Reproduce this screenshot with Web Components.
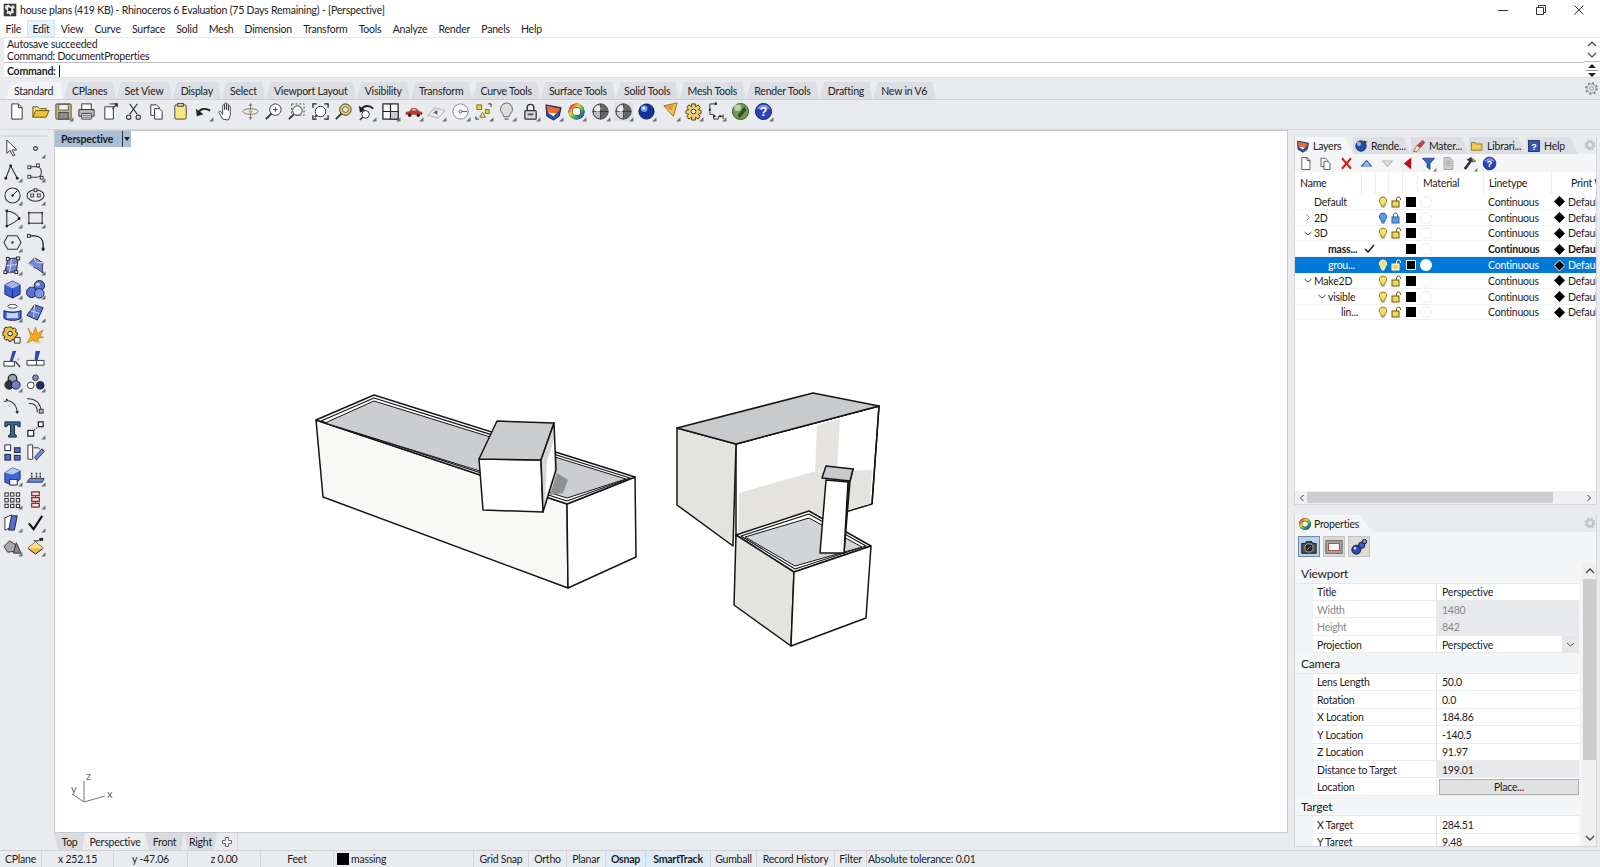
<!DOCTYPE html>
<html>
<head>
<meta charset="utf-8">
<title>house plans - Rhinoceros 6</title>
<style>
  html, body { margin: 0; height: 100%; overflow: hidden; background: #e9ebef; }
  body { font: 10.5px Lato, Roboto, sans-serif; letter-spacing: -.22px; color: #1c1c1c; }
</style>
</head>
<body>
<rh-app>
  <rh-titlebar slot="title">house plans (419 KB) - Rhinoceros 6 Evaluation (75 Days Remaining) - [Perspective]</rh-titlebar>
  <rh-menubar slot="menu">
    <rh-menu-item>File</rh-menu-item><rh-menu-item hot>Edit</rh-menu-item><rh-menu-item>View</rh-menu-item><rh-menu-item>Curve</rh-menu-item><rh-menu-item>Surface</rh-menu-item><rh-menu-item>Solid</rh-menu-item><rh-menu-item>Mesh</rh-menu-item><rh-menu-item>Dimension</rh-menu-item><rh-menu-item>Transform</rh-menu-item><rh-menu-item>Tools</rh-menu-item><rh-menu-item>Analyze</rh-menu-item><rh-menu-item>Render</rh-menu-item><rh-menu-item>Panels</rh-menu-item><rh-menu-item>Help</rh-menu-item>
  </rh-menubar>
  <rh-command slot="command"></rh-command>
  <rh-toolbars slot="toolbars">
    <rh-tab slot="tabs" active>Standard</rh-tab><rh-tab slot="tabs">CPlanes</rh-tab><rh-tab slot="tabs">Set View</rh-tab><rh-tab slot="tabs">Display</rh-tab><rh-tab slot="tabs">Select</rh-tab><rh-tab slot="tabs">Viewport Layout</rh-tab><rh-tab slot="tabs">Visibility</rh-tab><rh-tab slot="tabs">Transform</rh-tab><rh-tab slot="tabs">Curve Tools</rh-tab><rh-tab slot="tabs">Surface Tools</rh-tab><rh-tab slot="tabs">Solid Tools</rh-tab><rh-tab slot="tabs">Mesh Tools</rh-tab><rh-tab slot="tabs">Render Tools</rh-tab><rh-tab slot="tabs">Drafting</rh-tab><rh-tab slot="tabs">New in V6</rh-tab>
  </rh-toolbars>
  <rh-sidebar slot="side"></rh-sidebar>
  <rh-viewport slot="view"></rh-viewport>
  <rh-layers slot="layers">
    <rh-layer name="Default" depth="0" bulb="y" lock="y"></rh-layer>
    <rh-layer name="2D" depth="0" chev="r" bulb="b" lock="b"></rh-layer>
    <rh-layer name="3D" depth="0" chev="d" bulb="y" lock="y"></rh-layer>
    <rh-layer name="mass..." depth="1" current></rh-layer>
    <rh-layer name="grou..." depth="1" bulb="y" lock="y" selected></rh-layer>
    <rh-layer name="Make2D" depth="0" chev="d" bulb="y" lock="y"></rh-layer>
    <rh-layer name="visible" depth="1" chev="d" bulb="y" lock="y"></rh-layer>
    <rh-layer name="lin..." depth="2" bulb="y" lock="y"></rh-layer>
  </rh-layers>
  <rh-properties slot="props">
    <rh-section>Viewport</rh-section>
    <rh-prop label="Title" value="Perspective"></rh-prop>
    <rh-prop label="Width" value="1480" off></rh-prop>
    <rh-prop label="Height" value="842" off></rh-prop>
    <rh-prop label="Projection" value="Perspective" combo></rh-prop>
    <rh-section>Camera</rh-section>
    <rh-prop label="Lens Length" value="50.0"></rh-prop>
    <rh-prop label="Rotation" value="0.0"></rh-prop>
    <rh-prop label="X Location" value="184.86"></rh-prop>
    <rh-prop label="Y Location" value="-140.5"></rh-prop>
    <rh-prop label="Z Location" value="91.97"></rh-prop>
    <rh-prop label="Distance to Target" value="199.01" ro></rh-prop>
    <rh-prop label="Location" value="Place..." button></rh-prop>
    <rh-section>Target</rh-section>
    <rh-prop label="X Target" value="284.51"></rh-prop>
    <rh-prop label="Y Target" value="9.48"></rh-prop>
  </rh-properties>
  <rh-statusbar slot="status"></rh-statusbar>
</rh-app>

<script>
// icon strokes, all on a 20x20 box
const LINE = 'fill="none" stroke="#333" stroke-width="1.1"';
const ICONS = {
  new: `<path d="M5 2h7l4 4v12H5z" fill="#fff" stroke="#333"/><path d="M12 2v4h4" fill="none" stroke="#333"/>`,
  open: `<path d="M2 16V5h5l2 2h7v3" fill="#f6e08a" stroke="#6b5200"/><path d="M2 16l3-7h14l-3 7z" fill="#eec23f" stroke="#6b5200"/>`,
  save: `<rect x="2" y="2" width="16" height="16" rx="1" fill="#cfc06a" stroke="#444"/><rect x="5" y="2.500" width="10" height="6" fill="#f1f1ea" stroke="#555"/><rect x="5" y="11" width="10" height="7" fill="#8d8d8d" stroke="#444"/>`,
  print: `<rect x="5" y="2" width="10" height="6" fill="#fff" stroke="#333"/><path d="M2 8h16v7H2z" fill="#bbb" stroke="#333"/><path d="M5 12h10v6H5z" fill="#fff" stroke="#333"/><path d="M6 14h8M6 16h8" stroke="#555"/>`,
  options: `<path d="M4 5h9v13H4z" fill="#fff" stroke="#333"/><path d="M9 2h8v3" fill="none" stroke="#333"/><path d="M12 7l5-5m-3 0h3v3" fill="none" stroke="#333" stroke-width="1.400"/>`,
  cut: `<path d="M6 2l8 11M14 2L6 13" ${LINE}/><circle cx="5" cy="16" r="2.300" ${LINE}/><circle cx="15" cy="16" r="2.300" ${LINE}/>`,
  copy: `<path d="M4 3h6l3 3v8H4z" fill="#fff" stroke="#333"/><path d="M8 7h5l3 3v8H8z" fill="#fff" stroke="#333"/>`,
  paste: `<rect x="4" y="3" width="12" height="15" rx="1.500" fill="#f8e67e" stroke="#444"/><rect x="7" y="1.500" width="6" height="3" fill="#ccc" stroke="#444"/>`,
  undo: `<path d="M4 12c3-5 8-6 13-3" fill="none" stroke="#222" stroke-width="2.200"/><path d="M2 7l1 8 7-2z" fill="#222"/>`,
  hand: `<path d="M6 18l-4-7c0-1 1-2 2-1l2 3V4c0-1.500 2-1.500 2 0v4-6c0-1.500 2-1.500 2 0v6-5c0-1.500 2-1.500 2 0v6-4c0-1.500 2-1.500 2 0v9l-2 5z" fill="#fff" stroke="#333" stroke-width=".9"/>`,
  rotate: `<ellipse cx="10" cy="10" rx="8" ry="3" fill="none" stroke="#777"/><path d="M10 2v16" stroke="#777"/><circle cx="10" cy="10" r="2" fill="#e3b14a"/><path d="M10 1l-2 3h4zM10 19l-2-3h4z" fill="#777"/>`,
  zoom: `<circle cx="12" cy="8" r="6" fill="#fff" stroke="#333"/><path d="M8 12l-6 6" stroke="#333" stroke-width="2"/><path d="M9.500 8h5M12 5.500v5" stroke="#444"/>`,
  zoomwin: `<circle cx="11" cy="9" r="5" fill="#fff" stroke="#333"/><path d="M7 13l-5 5" stroke="#333" stroke-width="2"/><rect x="5" y="2" width="13" height="12" fill="none" stroke="#444" stroke-dasharray="2 2"/>`,
  zoomext: `<circle cx="10" cy="10" r="5.500" fill="#fff" stroke="#333"/><path d="M6 14l-2 2" stroke="#333" stroke-width="2"/><path d="M2 6V2h4M14 2h4v4M18 14v4h-4M6 18H2v-4" fill="none" stroke="#222" stroke-width="1.300"/>`,
  zoomsel: `<circle cx="12" cy="8" r="6" fill="#f3d04c" stroke="#333"/><circle cx="12" cy="8" r="3" fill="#eee" stroke="#555"/><path d="M8 12l-6 6" stroke="#333" stroke-width="2"/>`,
  undoview: `<path d="M4 9c3-6 9-6 13-2" fill="none" stroke="#222" stroke-width="2"/><path d="M2 4l1 7 6-2z" fill="#222"/><circle cx="9" cy="13" r="4" fill="#fff" stroke="#333"/><path d="M6 16l-3 3" stroke="#333" stroke-width="1.500"/>`,
  views: `<rect x="2" y="2" width="16" height="16" fill="#fff" stroke="#222" stroke-width="1.300"/><path d="M2 10h16M10 2v16" stroke="#222" stroke-width="1.300"/><path d="M10 10h8v8h-8z" fill="#ccc" stroke="#222"/>`,
  car: `<path d="M2 13v-2l4-1 2-3h5l3 3 3 1v2z" fill="#d33024" stroke="#8a1a12" stroke-width=".6"/><circle cx="6" cy="14" r="1.800" fill="#222"/><circle cx="15" cy="14" r="1.800" fill="#222"/><path d="M8 9l1-1.500h3l1.500 1.500z" fill="#dde"/>`,
  plane: `<path d="M1 14l7-8 11 3-7 8z" fill="#eee" stroke="#aaa"/><path d="M6 12l6-3M8 8l3 6" stroke="#888"/><circle cx="9.500" cy="11" r="1.500" fill="#555"/>`,
  circ: `<circle cx="10" cy="10" r="8" fill="#fafafa" stroke="#888"/><circle cx="10" cy="10" r="1.500" fill="none" stroke="#555"/><path d="M11.500 10H17" stroke="#555"/>`,
  osnap: `<path d="M3 3h5v5H3z" fill="#f2d343" stroke="#7b6a10"/><path d="M12 8h4v4h-4z" fill="#f2d343" stroke="#7b6a10"/><path d="M6 16l3-5 3 5z" fill="#f7e7a0" stroke="#7b6a10"/><path d="M15 2h3v3M2 15v3h3" fill="none" stroke="#222"/>`,
  bulb: `<path d="M10 1a6.500 6.500 0 0 0-4 11.500c.8 1 1 2 1 3h6c0-1 .2-2 1-3A6.500 6.500 0 0 0 10 1z" fill="#ddd" stroke="#666"/><path d="M8 17h4v2H8z" fill="#888"/>`,
  lock: `<rect x="4" y="9" width="12" height="9" rx="1" fill="#d8d8d8" stroke="#333" stroke-width="1.300"/><path d="M6.500 9V6a3.500 3.500 0 0 1 7 0v3" fill="none" stroke="#333" stroke-width="1.500"/><rect x="7" y="12" width="6" height="2" fill="#555"/>`,
  render: `<path d="M2 3l16 3-2 9-6 4-7-4z" fill="#2f4f9f" stroke="#223"/><path d="M3 4l14 3-4 5-9-1z" fill="#f26a2a"/><path d="M4 11l9 1-3 3z" fill="#fff"/>`,
  wheel: `<circle cx="10" cy="10" r="8.500" fill="#222"/><circle cx="10" cy="10" r="6.500" fill="none" stroke="url(#w)" stroke-width="4"/><defs><linearGradient id="w" x1="0" y1="0" x2="1" y2="1"><stop offset="0" stop-color="#e33"/><stop offset=".35" stop-color="#ec3"/><stop offset=".65" stop-color="#3b5"/><stop offset="1" stop-color="#33c"/></linearGradient></defs><circle cx="10" cy="10" r="4" fill="#fff"/>`,
  sphere: `<circle cx="10" cy="10" r="8" fill="#bbb" stroke="#222"/><path d="M10 2a8 8 0 0 1 0 16z" fill="#666"/><path d="M2 10h16M10 2v16" stroke="#222" stroke-width=".7"/><circle cx="7" cy="7" r="3" fill="#eee"/>`,
  sphere2: `<rect x="0" y="0" width="20" height="20" fill="#dfe1e5"/><circle cx="10" cy="10" r="8" fill="#ccc" stroke="#222"/><path d="M10 2a8 8 0 0 1 0 16z" fill="#666"/><path d="M2 10h16M10 2v16" stroke="#222" stroke-width=".7"/><circle cx="7" cy="7" r="3" fill="#f4f4f4"/>`,
  blue: `<circle cx="10" cy="10" r="8" fill="#12329c" stroke="#0a1a55"/><circle cx="7.500" cy="7" r="3.500" fill="#6f9bf0"/><circle cx="7" cy="6.500" r="1.300" fill="#fff"/>`,
  cone: `<path d="M3 4l14-3-4 14z" fill="#f4c64d" stroke="#92691a"/><path d="M5 5l9-2-3 6z" fill="#ee8d4f"/>`,
  gear: `<path d="M8 2h4v3l3-2 2 3-2 2 3 1v3l-3 1 2 2-2 3-3-2v3H8v-3l-3 2-2-3 2-2-3-1V9l3-1-2-2 2-3 3 2z" fill="#f0cf6a" stroke="#4a3a10"/><circle cx="10" cy="10" r="2.500" fill="#fff" stroke="#4a3a10"/>`,
  nodes: `<path d="M3 2h5M3 2v11M3 13h4v5h5v-3h5" fill="none" stroke="#333"/><rect x="8" y="0.500" width="2.500" height="2.500" fill="#222"/><rect x="2" y="7" width="2" height="2" fill="#222"/><rect x="7" y="14" width="2" height="2" fill="#222"/><rect x="13" y="14" width="2" height="2" fill="#222"/><path d="M17 13v5" stroke="#333"/>`,
  globe: `<circle cx="10" cy="10" r="8.500" fill="#6f9a55" stroke="#3d5a30"/><circle cx="7" cy="6" r="3.500" fill="#bcd6a8"/><path d="M14 5l-7 9 2 3 7-8z" fill="#334c28"/>`,
  help: `<circle cx="10" cy="10" r="8.500" fill="#2a43b8" stroke="#16246a"/><path d="M3 7a8 8 0 0 1 14 0z" fill="#7d90e8"/><text x="10" y="15" text-anchor="middle" font-family="Liberation Sans" font-weight="700" font-size="13" fill="#fff">?</text>`,

  arrow: `<path d="M4 1v14l3.500-3 3 6 2-1-3-5.500h5z" fill="#fff" stroke="#333"/>`,
  dot: `<circle cx="10" cy="10" r="2" fill="#fff" stroke="#333" stroke-width="1.200"/>`,
  poly: `<path d="M3 16L8 3l7 13" ${LINE}/><circle cx="3" cy="16" r="1.500" fill="#222"/><circle cx="8" cy="3" r="1.500" fill="#222"/><circle cx="15" cy="16" r="1.500" fill="#222"/>`,
  curve: `<path d="M3 4h8c7 0 7 11 0 11H3" ${LINE}/><g fill="#fff" stroke="#333"><rect x="2" y="3" width="3" height="3"/><rect x="11" y="1" width="3" height="3"/><rect x="15" y="14" width="3" height="3"/><rect x="2" y="13" width="3" height="3"/></g>`,
  circle: `<circle cx="10" cy="10" r="8" ${LINE}/><path d="M10 10l5-5" stroke="#333"/><circle cx="10" cy="10" r="1.300" fill="#222"/>`,
  ellipse: `<ellipse cx="10" cy="10" rx="9" ry="6" ${LINE}/><g fill="#fff" stroke="#333"><rect x="8.500" y="3" width="3" height="3"/><rect x="5" y="8.500" width="3" height="3"/><rect x="12" y="8.500" width="3" height="3"/></g>`,
  arc: `<path d="M4 2c8 1 12 5 13 8-3 3-8 6-13 8z" ${LINE}/><circle cx="4" cy="2" r="1.500" fill="#222"/><circle cx="17" cy="10" r="1.500" fill="#222"/><circle cx="4" cy="18" r="1.500" fill="#222"/>`,
  rect: `<path d="M3 4h14v11H3z" ${LINE}/><g fill="#333"><rect x="2" y="3" width="2" height="2"/><rect x="16" y="3" width="2" height="2"/><rect x="2" y="14" width="2" height="2"/><rect x="16" y="14" width="2" height="2"/></g>`,
  hex: `<path d="M5 3h10l4 7-4 7H5l-4-7z" ${LINE}/><circle cx="10" cy="10" r="1.300" fill="#333"/>`,
  fillet: `<path d="M3 3h6c6 0 9 4 9 9v5" fill="none" stroke="#222" stroke-width="1.400"/><rect x="1.500" y="1.500" width="3" height="3" fill="#fff" stroke="#222"/><rect x="16.500" y="15.500" width="3" height="3" fill="#222"/>`,
  srf: `<path d="M5 3l11-1-2 15H2z" fill="#6f83cf" stroke="#223"/><path d="M3.500 10l11-1M9 3l-2 14" stroke="#dde"/><g fill="#fff" stroke="#222"><rect x="3.500" y="1.500" width="3" height="3"/><rect x="14.500" y="1" width="3" height="3"/><rect x="1" y="15.500" width="3" height="3"/><rect x="12.500" y="15.500" width="3" height="3"/></g>`,
  srf2: `<path d="M3 8l6-6 9 5c-1 3-1 7 0 11-4-3-8-6-10-6z" fill="#7388d8" stroke="#334"/><path d="M3 8c2 1 5 3 5 6M9 2c0 3 2 6 9 5" fill="none" stroke="#eee"/>`,
  cube: `<path d="M10 1l8 4v10l-8 4-8-4V5z" fill="#3e5ed6" stroke="#1a2a70"/><path d="M10 1l8 4-8 4-8-4z" fill="#9fb2f0"/><path d="M10 9v10" stroke="#1a2a70"/>`,
  spheres: `<circle cx="14" cy="6" r="5.500" fill="#5673da" stroke="#223"/><circle cx="6" cy="13" r="5.500" fill="#5673da" stroke="#223"/><circle cx="14" cy="14" r="5" fill="#7f97e8" stroke="#223"/><circle cx="12.500" cy="4.500" r="2" fill="#bdd"/>`,
  cyl: `<path d="M1 8c3 2 15 2 18 0v8c-3 3-15 3-18 0z" fill="#3d62de" stroke="#223"/><path d="M4 10c3 1 9 1 12 0v6H4z" fill="#c7d4f7"/><ellipse cx="10" cy="3.500" rx="5" ry="2" fill="#fff" stroke="#444"/>`,
  patch: `<path d="M1 13l8-11 9 3-6 13z" fill="#5f79d8" stroke="#223"/><path d="M5 8l9 3M9 2l-1 13" stroke="#dde"/>`,
  gearo: `<path d="M6 1h3l1 2 2-1 2 2-1 2 2 1v3l-2 1 1 2-2 2-2-1-1 2H6l-1-2-2 1-2-2 1-2-2-1V6l2-1-1-2 2-2 2 1z" fill="#f2c23c" stroke="#222"/><circle cx="7.500" cy="8" r="2.500" fill="#fff" stroke="#222"/><path d="M12 12h6v6h-6z" fill="#eee" stroke="#333"/>`,
  burst: `<path d="M2 2l5 7 3-8 2 7 6-4-3 7 4 1-7 1 2 5-7-3-6 3 4-7z" fill="#f4ab1c" stroke="#b86c00" stroke-width=".6"/><path d="M3 19l15-5v5z" fill="#ddd" opacity=".5"/>`,
  trim: `<path d="M1 12h11v5H1z" fill="#fff" stroke="#333"/><path d="M10 1h4l-4 11H7z" fill="#2949bd"/><path d="M13 12l5 6" stroke="#333" stroke-width="1.500"/><circle cx="16" cy="10" r="1.500" fill="#bbb"/>`,
  split: `<path d="M1 11h18v5H1z" fill="#fff" stroke="#333"/><path d="M10 1h5l-3 10H9z" fill="#2949bd"/><path d="M11 11v5" stroke="#333"/>`,
  bool: `<circle cx="10" cy="6" r="4.500" fill="#9aa4b8" stroke="#222" stroke-width="1.400"/><circle cx="6.500" cy="12.500" r="4.500" fill="#333" stroke="#222"/><circle cx="13.500" cy="12.500" r="4.500" fill="#6d7fd5" stroke="#222"/>`,
  dots3: `<circle cx="10" cy="5" r="3" fill="#7f8ec8" stroke="#333"/><circle cx="5" cy="13" r="3.500" fill="#fff" stroke="#333"/><circle cx="15" cy="13" r="4" fill="#1f2a6a" stroke="#222"/>`,
  offset: `<path d="M1 6c7-3 13 2 14 11" ${LINE}/><circle cx="4" cy="4" r="1" fill="#222"/><path d="M13 16l2 3 2-3" fill="#222"/>`,
  offset2: `<path d="M1 3c8-1 15 4 15 14" ${LINE}/><path d="M3 8c6-1 9 3 9 9" ${LINE}/><g fill="#bbb" stroke="#333"><rect x="14" y="14" width="4" height="4"/></g>`,
  text: `<path d="M2 2h16v5h-2l-1-2h-3v10l2 1v2H6v-2l2-1V5H5L4 7H2z" fill="#3868a8" stroke="#122"/>`,
  scale: `<rect x="2" y="11" width="6" height="6" fill="#fff" stroke="#222" stroke-width="1.300"/><rect x="13" y="2" width="5" height="5" fill="#fff" stroke="#222" stroke-width="1.300"/><path d="M8 11l5-4" stroke="#222" stroke-dasharray="2 1"/>`,
  group: `<g stroke="#223" fill="#fff"><rect x="2" y="2" width="6" height="6"/><rect x="2" y="12" width="6" height="6" fill="#4d6fd0"/><rect x="12" y="5" width="6" height="5" fill="#4d6fd0"/><rect x="12" y="13" width="6" height="5" fill="#4d6fd0"/></g>`,
  align: `<path d="M2 2h5v15H2z" fill="#fff" stroke="#333"/><path d="M9 15l8-9 2 3-8 9z" fill="#6f8bdc" stroke="#334"/><path d="M8 5h5l2 2" fill="none" stroke="#333"/>`,
  bbox: `<path d="M2 6l8-5 8 3v9l-8 6-8-3z" fill="#3e66dc" stroke="#1a2a70"/><path d="M2 6l8 2 8-4-8-3z" fill="#b9c9f5"/><path d="M7 13h8v6H7z" fill="#fff" stroke="#222"/>`,
  arrayl: `<path d="M1 16l3-4h15l-2 4z" fill="#6f8bdc" stroke="#334"/><path d="M6 11V6M11 11V5M15 11V6" stroke="#333" stroke-width="1.600" stroke-dasharray="2 1"/>`,
  dots: `<g fill="#fff" stroke="#222"><rect x="2" y="3" width="3.500" height="3.500"/><rect x="8" y="3" width="3.500" height="3.500"/><rect x="14" y="3" width="3.500" height="3.500"/><rect x="2" y="9" width="3.500" height="3.500"/><rect x="8" y="9" width="3.500" height="3.500"/><rect x="14" y="9" width="3.500" height="3.500"/><rect x="2" y="15" width="3.500" height="3.500"/><rect x="8" y="15" width="3.500" height="3.500"/><rect x="14" y="15" width="3.500" height="3.500"/></g>`,
  chain: `<path d="M10 1v18" stroke="#555"/><g fill="#f3dada" stroke="#8a1c1c" stroke-width="1.200"><rect x="6" y="2" width="8" height="4"/><rect x="6" y="8" width="8" height="4"/><rect x="6" y="14" width="8" height="4"/></g>`,
  page: `<path d="M2 5l7-3v13l-7 3z" fill="#fff" stroke="#333"/><path d="M9 3l6 0-3 15-6 0z" fill="#4f70d4" stroke="#223"/>`,
  check: `<path d="M3 11l5 6L17 3" fill="none" stroke="#111" stroke-width="2.200"/>`,
  solids: `<path d="M1 10l6-6 6 4v7l-8 1z" fill="#aaa" stroke="#333"/><path d="M11 17l3-11 5 11z" fill="#888" stroke="#333"/>`,
  material: `<path d="M10 5l8 7-8 6-8-6z" fill="#efb93d" stroke="#222"/><path d="M10 5l8 7H2z" fill="#f7dd8a"/><rect x="14" y="1" width="4" height="3" fill="#222"/><path d="M8 4h6" stroke="#222"/>`,

  lx: `<path d="M4 3l12 14M16 3L4 17" stroke="#c8201a" stroke-width="2.600"/>`,
  lup: `<path d="M2 14L10 5l8 9z" fill="#2a5bb8"/><path d="M5 13l5-6 5 6z" fill="#9dc0ee"/>`,
  ldown: `<path d="M2 6h16l-8 9z" fill="#b8b8b8"/><path d="M5 7h10l-5 6z" fill="#ddd"/>`,
  lleft: `<path d="M15 2v16L5 10z" fill="#b3141a"/>`,
  lfilter: `<path d="M2 3h16l-6 7v8l-4-3v-5z" fill="#3563c9" stroke="#1c3570"/>`,
  ldoc: `<path d="M4 2h8l4 4v12H4z" fill="#ccc" stroke="#999"/><path d="M7 7h6M7 10h6M7 13h6" stroke="#999"/>`,
  lhammer: `<path d="M7 5l5-3 6 5-3 1-2-1-8 11-2-2 7-9z" fill="#334" stroke="#222"/><path d="M12 2l6 5-3 1z" fill="#c7a24a"/>`,
  camera: `<path d="M2 6h4l1-2h6l1 2h4v11H2z" fill="#555" stroke="#111"/><circle cx="10" cy="11" r="4.500" fill="#222" stroke="#aaa"/><path d="M8 13l4-4" stroke="#aaa"/>`,
  vrect: `<rect x="1" y="3" width="18" height="14" fill="#aaa" stroke="#555"/><rect x="4" y="6" width="12" height="8" fill="#fff" stroke="#a33"/>`,
  balls: `<circle cx="7" cy="13" r="5" fill="#2748b8" stroke="#112"/><circle cx="13" cy="8" r="3.500" fill="#3c5fd0" stroke="#112"/><circle cx="16" cy="4" r="2.500" fill="#6d8be0" stroke="#112"/><circle cx="5.500" cy="11.500" r="1.500" fill="#cde"/>`,
  gearg: `<circle cx="10" cy="10" r="5.500" fill="none" stroke="#c3c5c9" stroke-width="4" /><circle cx="10" cy="10" r="8" fill="none" stroke="#c3c5c9" stroke-width="2.500" stroke-dasharray="3 3.300"/>`,
  gearline: `<circle cx="10" cy="10" r="2.500" fill="none" stroke="#777"/><circle cx="10" cy="10" r="6" fill="none" stroke="#777"/><circle cx="10" cy="10" r="7.500" fill="none" stroke="#777" stroke-width="2" stroke-dasharray="2.500 3.400"/>`,
  ball: `<circle cx="10" cy="10" r="7.500" fill="#1d4fb0" stroke="#123"/><circle cx="7" cy="7" r="3" fill="#8fb4ef"/><path d="M14 2l5 2-3 3z" fill="#333"/>`,
  brush: `<path d="M2 18l5-9 5 3-5 6z" fill="#f0e3c0" stroke="#844"/><path d="M8 9l7-7 3 3-6 7z" fill="#c44" stroke="#622"/>`,
  folder: `<path d="M2 16V5h5l2 2h8v9z" fill="#f2cd58" stroke="#6b5200"/>`,
  helpdoc: `<rect x="2" y="2" width="16" height="16" fill="#3356b5" stroke="#123"/><text x="10" y="15" text-anchor="middle" font-family="Liberation Sans" font-weight="700" font-size="13" fill="#fff">?</text>`,
  rhino: `<path d="M1 1h18v18H1z" fill="#3a3a3a"/><path d="M3 4l5-2 3 3 4-2 2 4-3 2 2 5-4 1-1 3-3-3-3 1 1-5-3-3z" fill="#e6e6e6"/><path d="M8 6l4 2-1 4-4-1z" fill="#222"/>`,
};

class RhIcon extends HTMLElement {
  connectedCallback() {
    const size = this.getAttribute('size') || 22;
    const flag = this.hasAttribute('fly') ? '<path d="M20.500 16V20.500H16z" fill="#6f7276"/>' : '';
    this.attachShadow({ mode: 'open' }).innerHTML = `<style>
      :host { display: inline-flex; align-items: center; justify-content: center; flex: none; }
      svg { display: block; overflow: visible; }
    </style><svg width="${size}" height="${size}" viewBox="0 0 20 20">${ICONS[this.getAttribute('name')] || ''}${flag}</svg>`;
  }
}
customElements.define('rh-icon', RhIcon);

// small base for elements that are only a style and a slot
function simple(tag, css, html = '<slot></slot>') {
  customElements.define(tag, class extends HTMLElement {
    connectedCallback() {
      if (this.shadowRoot) return;
      this.attachShadow({ mode: 'open' }).innerHTML = `<style>${css}</style>${html}`;
    }
  });
}

simple('rh-app', `
  :host { display: grid; height: 867px; width: 1600px; overflow: hidden;
    grid-template-columns: 54px 1234px 6px 303px 3px;
    grid-template-rows: 20px 17px 41px 52px 375px 10px 332px 3px 17px; }
  ::slotted([slot=title]), ::slotted([slot=menu]), ::slotted([slot=toolbars]), ::slotted([slot=status]) { grid-column: 1 / -1; }
  ::slotted([slot=command]) { grid-column: 1 / -1; }
  ::slotted([slot=side]) { grid-column: 1; grid-row: 5 / 9; }
  ::slotted([slot=view]) { grid-column: 2; grid-row: 5 / 9; }
  ::slotted([slot=layers]) { grid-column: 4; grid-row: 5; margin-top: 7px; }
  ::slotted([slot=props]) { grid-column: 4; grid-row: 7; }
  ::slotted([slot=status]) { grid-row: 9; }
`, `<slot name="title"></slot><slot name="menu"></slot><slot name="command"></slot><slot name="toolbars"></slot><slot name="side"></slot><slot name="view"></slot><slot name="layers"></slot><slot name="props"></slot><slot name="status"></slot>`);

class RhTitlebar extends HTMLElement {
  connectedCallback() {
    this.attachShadow({ mode: 'open' }).innerHTML = `<style>
      :host { display: flex; align-items: center; background: #fff; height: 20px; padding-left: 3px; box-sizing: border-box; }
      .t { margin-left: 3px; flex: 1; color: #222; }
      .b { width: 38px; display: flex; justify-content: center; }
      .w { display: flex; margin-right: 2px; }
      svg { display: block; }
    </style><rh-icon name="rhino" size="14"></rh-icon><span class="t"><slot></slot></span>
    <div class="w">
      <div class="b"><svg width="12" height="12"><path d="M1 6.500h10" stroke="#333"/></svg></div>
      <div class="b"><svg width="12" height="12"><path d="M1.500 3.500h7v7h-7zM3.500 3.500v-2h7v7h-2" fill="none" stroke="#333"/></svg></div>
      <div class="b"><svg width="12" height="12"><path d="M1.500 1.500l9 9M10.500 1.500l-9 9" stroke="#333"/></svg></div>
    </div>`;
  }
}
customElements.define('rh-titlebar', RhTitlebar);

simple('rh-menubar', `:host { display: flex; background: #fff; height: 17px; padding-top: 0; }`);
simple('rh-menu-item', `
  :host { display: flex; align-items: center; padding: 0 5.6px; height: 17px; }
  :host([hot]) { background: #e5f1fb; outline: 1px solid #d3e6f6; outline-offset: -1px; }
`);

class RhCommand extends HTMLElement {
  connectedCallback() {
    this.attachShadow({ mode: 'open' }).innerHTML = `<style>
      :host { display: grid; grid-template-columns: 1fr 16px; margin-left: 4px; background: #fff; height: 41px; box-sizing: border-box; border-top: 1px solid #e4e5e8; border-bottom: 1px solid #dcdee2; }
      .hist { height: 24px; padding-left: 3px; line-height: 12px; border-bottom: 1px solid #b9bbbf; }
      .in { padding-left: 3px; display: flex; align-items: center; font-weight: 700; grid-column: 1; }
      .caret { width: 1px; height: 12px; background: #111; margin-left: 3px; }
      .s { display: flex; flex-direction: column; align-items: center; justify-content: space-around; border-bottom: 1px solid #b9bbbf; height: 24px; box-sizing: border-box; }
      .spin { display: flex; flex-direction: column; align-items: center; justify-content: center; gap: 1px; }
      svg { display: block; }
    </style>
    <div class="hist">Autosave succeeded<br>Command: DocumentProperties</div>
    <div class="s">
      <svg width="10" height="6"><path d="M1 5l4-4 4 4" fill="none" stroke="#444" stroke-width="1.200"/></svg>
      <svg width="10" height="6"><path d="M1 1l4 4 4-4" fill="none" stroke="#444" stroke-width="1.200"/></svg>
    </div>
    <div class="in">Command:<span class="caret"></span></div>
    <div class="spin">
      <svg width="10" height="6"><path d="M1 5l4-4 4 4z" fill="#222"/></svg>
      <svg width="12" height="1"><path d="M0 .5h12" stroke="#999"/></svg>
      <svg width="10" height="6"><path d="M1 1l4 4 4-4z" fill="#222"/></svg>
    </div>`;
  }
}
customElements.define('rh-command', RhCommand);

const TOP_ICONS = ['new','open','save fly','print','options','cut','copy','paste','undo fly','hand','rotate','zoom','zoomwin','zoomext','zoomsel','undoview fly','views fly','car fly','plane fly','circ fly','osnap fly','bulb fly','lock fly','render fly','wheel fly','sphere fly','sphere2 fly','blue fly','cone fly','gear fly','nodes fly','globe','help fly'];

class RhToolbars extends HTMLElement {
  connectedCallback() {
    this.attachShadow({ mode: 'open' }).innerHTML = `<style>
      :host { display: block; height: 52px; box-sizing: border-box; padding-top: 4px; background: #e9ebef; border-bottom: 1px solid #d4d6da; }
      .tabs { display: flex; align-items: flex-end; height: 17px; padding-left: 6px; border-bottom: 1px solid #c9ccd2; position: relative; }
      .gear { position: absolute; right: 1px; top: -1px; }
      .icons { display: flex; padding: 2px 0 0 5px; }
      .icons rh-icon { width: 23.35px; }
    </style>
    <div class="tabs"><slot name="tabs"></slot><rh-icon class="gear" name="gearline" size="15"></rh-icon></div>
    <div class="icons">${TOP_ICONS.map(i => {
      const [n, f] = i.split(' ');
      return `<rh-icon name="${n}" size="19" ${f || ''}></rh-icon>`;
    }).join('')}</div>`;
  }
}
customElements.define('rh-toolbars', RhToolbars);

simple('rh-tab', `
  :host { display: flex; align-items: center; height: 17px; padding: 0 8.35px; background: #dcdee3; margin-right: 0.5px;
    clip-path: polygon(0 100%, 5px 0, calc(100% - 3px) 0, 100% 100%); color: #222; }
  :host([active]) { background: #f3f4f7; padding: 0 10px 0 8px; }
`);

const SIDE_ICONS = ['arrow','dot fly','poly fly','curve fly','circle fly','ellipse fly','arc fly','rect fly','hex fly','fillet','srf fly','srf2 fly','cube fly','spheres fly','cyl fly','patch fly','gearo','burst','trim','split','bool fly','dots3 fly','offset','offset2','text','scale fly','group','align','bbox fly','arrayl fly','dots fly','chain fly','page fly','check fly','solids fly','material fly'];

class RhSidebar extends HTMLElement {
  connectedCallback() {
    this.attachShadow({ mode: 'open' }).innerHTML = `<style>
      :host { display: block; padding: 6px 0 0 1px; box-sizing: border-box; }
      .g { display: grid; grid-template-columns: 23px 23px; grid-auto-rows: 23.4px; border-top: 2px solid #d6d8dc; width: 46px; margin-top: -1px; }
      rh-icon { align-self: center; justify-self: center; }
    </style><div class="g">${SIDE_ICONS.map(i => {
      const [n, f] = i.split(' ');
      return `<rh-icon name="${n}" size="19" ${f || ''}></rh-icon>`;
    }).join('')}</div>`;
  }
}
customElements.define('rh-sidebar', RhSidebar);

class RhViewport extends HTMLElement {
  connectedCallback() {
    const tabs = [['Top', 31, 0], ['Perspective', 60, 1], ['Front', 39, 0], ['Right', 33, 0]];
    this.attachShadow({ mode: 'open' }).innerHTML = `<style>
      :host { display: flex; flex-direction: column; min-height: 0; }
      .canvas { position: relative; flex: 1; background: #fff; border: 1px solid #c8cace; box-sizing: border-box; overflow: hidden; }
      .name { position: absolute; left: 0; top: 0; height: 16px; width: 76px; background: #a9bfd8; display: flex; align-items: center; font-weight: 700; padding-left: 6px; box-sizing: border-box; }
      .name i { position: absolute; right: 0; top: 0; width: 9px; height: 16px; border-left: 1px solid #333; box-sizing: border-box; }
      .name i::after { content: ""; position: absolute; left: 1px; top: 6px; border: 3px solid transparent; border-top: 4px solid #222; }
      svg.scene { position: absolute; left: -1px; top: -1px; }
      .tabs { display: flex; height: 17px; flex: none; }
      .tab { display: flex; align-items: center; justify-content: center; background: #d9dbdf; height: 17px; clip-path: polygon(0 0, 100% 0, calc(100% - 3px) 100%, 4px 100%); }
      .tab.on { background: #edeff2; }
      .plus { width: 20px; display: flex; align-items: center; justify-content: center; border-right: 1px solid #d3d5d9; }
      text { font-family: Lato, sans-serif; }
    </style>
    <div class="canvas">
      <svg class="scene" width="1234" height="703" viewBox="54 130 1234 703">
        <!-- long box -->
        <g stroke="#151515" stroke-width="1.500" stroke-linejoin="round">
          <path d="M316 420L323 497L568 588L567 504Z" fill="#f8f8f7"/>
          <path d="M567 504L568 588L636 557L635 477Z" fill="#fff"/>
          <path d="M316 420L374 395L635 477L567 504Z" fill="#fff"/>
          <path d="M321 421L374 398L630 478L567 501Z" fill="#fff" stroke-width="1.200"/>
          <path d="M325 423L374 401L626 479L567 498Z" fill="#cccdd0" stroke-width="1"/>
          <path d="M557 473L568 480L563 493L550 495Z" fill="#8f9094" stroke="none"/>
          <path d="M479 459L541 460L543 512L483 510Z" fill="#fff"/>
          <path d="M479 459L497 421L554 423L541 460Z" fill="#cbccce"/>
          <path d="M541 460L554 423L556 470L543 512Z" fill="#d6d6d6"/>
          <path d="M547 461L554 440L554 472L545 500Z" fill="#fff" stroke="none"/>
        </g>
        <!-- big box -->
        <g stroke="#151515" stroke-width="1.500" stroke-linejoin="round">
          <path d="M736 444L879 406L872 504L736 545Z" fill="#fff"/>
          <path d="M817 425L840 419L837 470L815 472Z" fill="#e4e3df" stroke="none"/>
          <path d="M739 493L812 472L872 470L870 504L738 535Z" fill="#e4e3df" stroke="none"/>
          <path d="M736 444L879 406L872 504" fill="none"/>
          <path d="M677 428L736 444L733 546L677 505Z" fill="#e3e3e0"/>
          <path d="M677 428L813 393L879 406L736 444Z" fill="#c9cacc"/>
          <path d="M736 535L809 511L871 546L794 572Z" fill="#fff"/>
          <path d="M741 536L809 514L866 546L795 569Z" fill="#fff" stroke-width="1.200"/>
          <path d="M745 537L809 518L862 547L795 566Z" fill="#d1d5d8" stroke-width="1"/>
          <path d="M736 535L794 572L791 646L734 605Z" fill="#e3e3e0"/>
          <path d="M794 572L871 546L866 618L791 646Z" fill="#fff"/>
          <path d="M848 482L853 469L850 481L844 553Z" fill="#555"/>
          <path d="M826 480L848 482L844 553L820 553Z" fill="#fff"/>
          <path d="M822 478L826 466L853 469L850 481Z" fill="#c9cacc"/>
        </g>
        <!-- axis -->
        <g stroke="#777" stroke-width="1" fill="none">
          <path d="M84 802V781M84 802L105 796M84 802L72 794"/>
        </g>
        <g fill="#666" font-size="11">
          <text x="86" y="780">z</text><text x="71" y="793">y</text><text x="107" y="798">x</text>
        </g>
      </svg>
      <div class="name">Perspective<i></i></div>
    </div>
    <div class="tabs">
      ${tabs.map(t => `<div class="tab ${t[2] ? 'on' : ''}" style="width:${t[1]}px">${t[0]}</div>`).join('')}
      <div class="plus"><svg width="10" height="10"><path d="M3.500.5h3v3h3v3h-3v3h-3v-3h-3v-3h3z" fill="#fff" stroke="#666"/></svg></div>
    </div>`;
  }
}
customElements.define('rh-viewport', RhViewport);

const LAYER_GRID = '67px 14px 13px 14px 15px 66px 68px 46px';

class RhLayers extends HTMLElement {
  connectedCallback() {
    const tabs = [['render', 'Layers', 58, 1], ['ball', 'Rende...', 58], ['brush', 'Mater...', 58], ['folder', 'Librari...', 57], ['helpdoc', 'Help', 52]];
    const tools = ['new','copy','lx','lup','ldown','lleft','lfilter fly','ldoc','lhammer fly','help'];
    const heads = ['Name', '', '', '', '', 'Material', 'Linetype', 'Print W'];
    this.attachShadow({ mode: 'open' }).innerHTML = `<style>
      :host { display: flex; flex-direction: column; border: 1px solid #d5d7db; border-top: 0; background: #fff; overflow: hidden; box-sizing: border-box; }
      .tabs { display: flex; height: 17px; flex: none; background: #e9ebef; position: relative; }
      .tab { display: flex; align-items: center; gap: 3px; padding-left: 1px; background: #dcdee3; clip-path: polygon(0 100%, 0 0, calc(100% - 8px) 0, 100% 100%); box-sizing: border-box; }
      .tab.on { background: #f4f5f7; }
      .gear { position: absolute; right: 0; top: 2px; }
      .tools { display: flex; height: 18px; flex: none; background: #f4f5f7; align-items: center; }
      .tools rh-icon { width: 20.5px; }
      .head { display: grid; grid-template-columns: ${LAYER_GRID}; height: 22px; flex: none; align-items: center; background: #fff; overflow: hidden; white-space: nowrap; }
      .head div { height: 100%; display: flex; align-items: center; border-right: 1px solid #eceded; box-sizing: border-box; padding-left: 5px; overflow: hidden; }
      .head div:last-child { padding-left: 19px; border: 0; }
      .rows { flex: 1; min-height: 0; }
      .bar { height: 13px; flex: none; background: #f0f0f0; display: flex; align-items: center; justify-content: space-between; padding: 0 3px; }
      .bar b { flex: 1; height: 11px; background: #cdcdcd; margin: 0 2px 0 1px; }
      .bar span { width: 30px; }
      svg { display: block; }
    </style>
    <div class="tabs">${tabs.map(t => `<div class="tab ${t[3] ? 'on' : ''}" style="width:${t[2]}px"><rh-icon name="${t[0]}" size="14"></rh-icon>${t[1]}</div>`).join('')}
      <rh-icon class="gear" name="gearg" size="12"></rh-icon></div>
    <div class="tools">${tools.map(i => {
      const [n, f] = i.split(' ');
      return `<rh-icon name="${n}" size="15" ${f || ''}></rh-icon>`;
    }).join('')}</div>
    <div class="head">${heads.map(h => `<div>${h}</div>`).join('')}</div>
    <div class="rows"><slot></slot></div>
    <div class="bar"><svg width="8" height="8"><path d="M5.500 1l-3 3 3 3" fill="none" stroke="#333"/></svg><b></b><span></span><svg width="8" height="8"><path d="M2.500 1l3 3-3 3" fill="none" stroke="#333"/></svg></div>`;
  }
}
customElements.define('rh-layers', RhLayers);

class RhLayer extends HTMLElement {
  connectedCallback() {
    const a = n => this.getAttribute(n);
    const sel = this.hasAttribute('selected');
    const cur = this.hasAttribute('current');
    const depth = +a('depth');
    const pad = [7, 21, 34][depth];
    const chev = { r: '<path d="M3 1.500l3 3-3 3" fill="none" stroke="#888"/>', d: '<path d="M1 3l3.500 3L8 3" fill="none" stroke="#444"/>' }[a('chev')] || '';
    const bulb = { y: ['#f7e06a', sel ? '#fff' : '#8a7420'], b: ['#5b9be8', '#2b5fa5'] }[a('bulb')];
    const lock = { y: ['#f3d75a', sel ? '#fff' : '#6b5a10'], b: ['#5b9be8', '#2b5fa5'] }[a('lock')];
    this.attachShadow({ mode: 'open' }).innerHTML = `<style>
      :host { display: grid; grid-template-columns: ${LAYER_GRID}; height: 15.8px; align-items: center; white-space: nowrap; overflow: hidden;
        background: ${sel ? '#0078d7' : '#fff'}; color: ${sel ? '#fff' : '#1c1c1c'}; font-weight: ${cur ? 700 : 400}; box-shadow: inset 0 -1px 0 ${sel ? '#0078d7' : '#f2f2f2'}; }
      .n { display: flex; align-items: center; padding-left: ${pad}px; }
      .n svg { width: 12px; flex: none; }
      .c { display: flex; justify-content: center; align-items: center; }
      .sw { width: 10px; height: 10px; background: #000; box-sizing: border-box; ${sel ? 'border: 1px solid #fff; outline: 1px solid #000; outline-offset: -2px;' : ''} }
      .m { width: 12px; height: 12px; border-radius: 50%; margin-left: 2px; box-sizing: border-box; ${sel ? 'background: #fff;' : 'border: 1px solid #eeeeee;'} }
      .p { display: flex; align-items: center; gap: 3px; padding-left: 2px; }
      .p svg { flex: none; }
      .l { padding-left: 4px; }
    </style>
    <div class="n"><svg height="9" viewBox="0 0 9 9">${chev}</svg>${a('name')}</div>
    <div class="c">${cur ? '<svg width="11" height="10"><path d="M1 5l3 3 6-7" fill="none" stroke="#111" stroke-width="1.300"/></svg>' : ''}</div>
    <div class="c">${bulb ? `<svg width="10" height="12" viewBox="0 0 10 12"><path d="M5 1a3.700 3.700 0 0 0-2.300 6.600L3.500 10h3l.8-2.400A3.700 3.700 0 0 0 5 1z" fill="${bulb[0]}" stroke="${bulb[1]}"/><path d="M3.500 11h3" stroke="${bulb[1]}"/></svg>` : ''}</div>
    <div class="c">${lock ? `<svg width="11" height="12" viewBox="0 0 11 12"><rect x="1" y="5" width="7" height="6" fill="${lock[0]}" stroke="${lock[1]}"/><path d="M${a('lock') === 'b' ? '2.500 5V3a2 2 0 0 1 4 0v2' : '5.500 5V3a2 2 0 0 1 4 0v1'}" fill="none" stroke="${lock[1]}"/></svg>` : ''}</div>
    <div class="c"><div class="sw"></div></div>
    <div><div class="m"></div></div>
    <div class="l">Continuous</div>
    <div class="p"><svg width="11" height="11"><path d="M5.500 0l5.500 5.500L5.500 11 0 5.500z" fill="#000" ${sel ? 'stroke="#fff"' : ''}/></svg>Defaul</div>`;
  }
}
customElements.define('rh-layer', RhLayer);

class RhProperties extends HTMLElement {
  connectedCallback() {
    this.attachShadow({ mode: 'open' }).innerHTML = `<style>
      :host { display: flex; flex-direction: column; border: 1px solid #d5d7db; border-top: 0; background: #f4f5f7; box-sizing: border-box; overflow: hidden; }
      .tabs { display: flex; height: 17px; flex: none; background: #e9ebef; position: relative; }
      .tab { display: flex; align-items: center; gap: 2px; width: 78px; padding-left: 3px; box-sizing: border-box; background: #f4f5f7; clip-path: polygon(0 100%, 0 0, calc(100% - 14px) 0, 100% 100%); }
      .gear { position: absolute; right: 0; top: 2px; }
      .pages { display: flex; gap: 3px; height: 31px; padding: 4px 0 0 3px; flex: none; box-sizing: border-box; }
      .pages div { width: 22px; height: 21px; display: flex; align-items: center; justify-content: center; background: #dcdad5; border: 1px solid #c2c3c4; box-sizing: border-box; }
      .pages div.on { background: #b6d4ee; border-color: #6e8ba6; }
      .body { flex: 1; min-height: 0; display: grid; grid-template-columns: 284px 18px; }
      .list { overflow: hidden; }
      .sb { background: #f0f0f0; display: flex; flex-direction: column; align-items: center; margin: 0 0 0 3px; }
      .sb svg { flex: none; margin: 5px 0; }
      .sb b { width: 14px; flex: none; height: 181px; background: #cdcdcd; }
      .sb span { flex: 1; }
      svg { display: block; }
    </style>
    <div class="tabs"><div class="tab"><rh-icon name="wheel" size="14"></rh-icon>Properties</div><rh-icon class="gear" name="gearg" size="12"></rh-icon></div>
    <div class="pages"><div class="on"><rh-icon name="camera" size="18"></rh-icon></div><div><rh-icon name="vrect" size="18"></rh-icon></div><div><rh-icon name="balls" size="18"></rh-icon></div></div>
    <div class="body">
      <div class="list"><slot></slot></div>
      <div class="sb"><svg width="10" height="6"><path d="M1 5l4-4 4 4" fill="none" stroke="#444" stroke-width="1.300"/></svg><b></b><span></span><svg width="10" height="6"><path d="M1 1l4 4 4-4" fill="none" stroke="#444" stroke-width="1.300"/></svg></div>
    </div>`;
  }
}
customElements.define('rh-properties', RhProperties);

simple('rh-section', `
  :host { display: flex; align-items: center; height: 20.5px; padding-left: 6px; font-size: 12px; background: #f4f5f7; box-shadow: inset 0 -1px 0 #e6e7ea; }
`);

class RhProp extends HTMLElement {
  connectedCallback() {
    const has = n => this.hasAttribute(n);
    const off = has('off');
    const v = this.getAttribute('value');
    let val = `<div class="v">${v}</div>`;
    if (has('combo')) val = `<div class="v combo">${v}<span><svg width="9" height="6"><path d="M1 1l3.500 3L8 1" fill="none" stroke="#555"/></svg></span></div>`;
    if (has('button')) val = `<div class="v btn"><span>${v}</span></div>`;
    this.attachShadow({ mode: 'open' }).innerHTML = `<style>
      :host { display: grid; grid-template-columns: 18px 124px 142px; height: 17.45px; align-items: stretch; }
      .s { background: #f2f3f5; }
      .l, .v { display: flex; align-items: center; background: #fff; box-shadow: inset 0 -1px 0 #ebecee; padding-left: 4px; color: ${off ? '#888' : '#1c1c1c'}; }
      .l { border-right: 1px solid #e6e7ea; }
      .v { padding-left: 5px; }
      ${off || has('ro') ? `.v { background: #e8e9ec; }` : ''}
      .combo { justify-content: space-between; padding-right: 0; }
      .combo span { width: 17px; height: 100%; background: #e6e6e6; display: flex; align-items: center; justify-content: center; }
      .btn { padding: 1px 0 1px 2px; background: #fff; }
      .btn span { flex: 1; height: 100%; background: #e1e1e1; border: 1px solid #adadad; box-sizing: border-box; display: flex; align-items: center; justify-content: center; }
    </style><div class="s"></div><div class="l">${this.getAttribute('label')}</div>${val}`;
  }
}
customElements.define('rh-prop', RhProp);

class RhStatusbar extends HTMLElement {
  connectedCallback() {
    const cells = [['CPlane',42,'l'],['x 252.15',72],['y -47.06',74],['z 0.00',73],['Feet',73],['<i></i>massing',140,'l'],['Grid Snap',55],['Ortho',38],['Planar',39],['Osnap',40,'on'],['SmartTrack',65,'on'],['Gumball',46],['Record History',78],['Filter',32],['Absolute tolerance: 0.01',0,'l']];
    this.attachShadow({ mode: 'open' }).innerHTML = `<style>
      :host { display: flex; height: 17px; background: #e9ebef; border-top: 1px solid #cfd1d5; box-sizing: border-box; }
      div { display: flex; align-items: center; justify-content: center; border-right: 1px solid #d2d4d8; box-sizing: border-box; white-space: nowrap; flex: none; }
      .l { justify-content: flex-start; padding-left: 5px; }
      .sw { padding-left: 3px; }
      .on { background: #dcebf7; font-weight: 700; }
      .end { border: 0; padding-left: 1px; }
      i { display: inline-block; width: 12px; height: 12px; background: #000; margin-right: 2px; }
    </style>${cells.map((c, n) => {
      let k = c[2] || '';
      if (n === 5) k += ' sw';
      if (n === 14) k += ' end';
      return `<div class="${k}" style="${c[1] ? 'width:' + c[1] + 'px' : ''}">${c[0]}</div>`;
    }).join('')}`;
  }
}
customElements.define('rh-statusbar', RhStatusbar);
</script>
</body>
</html>
